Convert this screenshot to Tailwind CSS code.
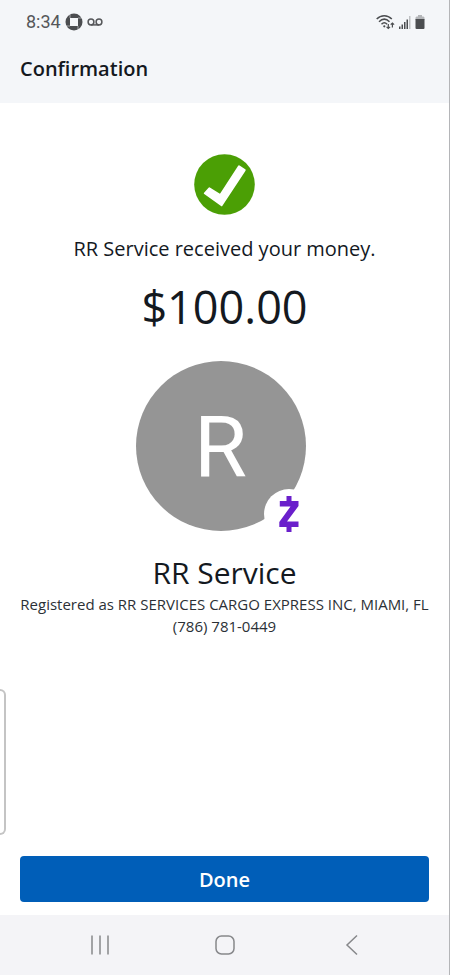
<!DOCTYPE html>
<html lang="en">
<head>
<meta charset="utf-8">
<meta name="viewport" content="width=device-width, initial-scale=1">
<title>Confirmation</title>
<script src="https://cdn.jsdelivr.net/npm/@tailwindcss/browser@4"></script>
</head>
<body class="relative flex min-h-screen flex-col border-r border-[#b4b5b8] bg-white font-['Open_Sans',sans-serif] text-[#14191f]">
  <header class="bg-[#f4f6f9]">
    <div class="flex h-11 items-center justify-between pr-6 pl-[26px]">
      <div class="flex items-center gap-1">
        <span class="font-[Roboto,sans-serif] text-[18px] leading-6 text-[#55575a]">8:34</span>
        <svg class="size-[18px]" viewBox="0 0 18 18" aria-hidden="true">
          <circle cx="9" cy="9" r="8.500" fill="#4b4d50"/>
          <path fill="#f4f6f9" d="M5 5h8v8H5z"/>
          <path stroke="#f4f6f9" stroke-width=".5" d="M5 1V5M17 5H13M13 17V13M1 13H5"/>
        </svg>
        <svg class="h-[9px] w-4" viewBox="0 0 16 9" fill="none" stroke="#55575a" stroke-width="1.500" aria-hidden="true">
          <circle cx="4" cy="4" r="2.900"/><circle cx="12" cy="4" r="2.900"/><path d="M4 6.900h8"/>
        </svg>
      </div>
      <div class="flex items-center gap-1">
        <svg class="h-4 w-[19px]" viewBox="0 0 19 16" fill="none" stroke="#4b4d50" stroke-width="1.500" aria-hidden="true">
          <path d="M.7 5C5 .6 11.500.6 15.800 5M3 7.700C6.300 4.500 10.300 4.500 13.500 7.700M5.500 10.200c1.700-1.700 3.900-1.700 5.600 0"/>
          <circle cx="8.300" cy="12.300" r="1.100" fill="#4b4d50" stroke="none"/>
          <path stroke-width="1.200" d="M12.300 10V14.500M10.600 12.800l1.700 1.700 1.700-1.700M16.400 13.500V9M14.700 10.700L16.400 9l1.700 1.700"/>
        </svg>
        <svg class="h-[13px] w-3" viewBox="0 0 12 13" aria-hidden="true">
          <path fill="#4b4d50" d="M0 10.500h1.500V13H0zM2.500 8.500H4V13H2.500zM5 6h1.500v7H5zM7.500 3.500H9V13H7.500z"/>
          <path fill="#bfc1c4" d="M10 0h1.500v13H10z"/>
        </svg>
        <svg class="h-[14px] w-[10px]" viewBox="0 0 10 14" aria-hidden="true">
          <path fill="#b4b6b9" d="M3 0h4v1.500h1.500l1 1V5h-9V2.500l1-1H3z"/>
          <path fill="#4b4d50" d="M.5 4h9v9q0 1-1 1h-7q-1 0-1-1z"/>
        </svg>
      </div>
    </div>
    <h1 class="px-5 pt-[13px] pb-[22px] text-[20px] leading-6 font-semibold">Confirmation</h1>
  </header>

  <main class="flex flex-1 flex-col items-center px-5 pt-[51px] text-center">
    <svg class="size-[61px]" viewBox="0 0 61 61" role="img" aria-label="Success">
      <circle cx="30.500" cy="30.500" r="30.300" fill="#4b9f05"/>
      <path fill="#fff" stroke="#fff" stroke-width="2" stroke-linejoin="round" d="M15.300 34.300L26.200 41.200 45 12.400 50.700 16.200 27.600 51.300 10.800 39.300z"/>
    </svg>
    <p class="mt-5 text-[20px] leading-7">RR Service received your money.</p>
    <p class="mt-[14px] text-[45px] leading-[60px]">$100.00</p>
    <div class="relative mt-6 mr-2 flex size-[170px] items-center justify-center rounded-full bg-[#959595]">
      <span class="pt-1 font-[Roboto,sans-serif] text-[86px] leading-none text-white">R</span>
      <span class="absolute -right-2 -bottom-2 flex size-[50px] items-center justify-center rounded-full bg-white">
        <svg class="h-9 w-5" viewBox="0 0 20 36" role="img" aria-label="Zelle">
          <path fill="#6a1fcb" d="M7.500 0h5v5H19.500v5L8 25.500H19.500V31H12.500v5h-5v-5H.3v-5L11.500 10.500H.8V5h6.700z"/>
        </svg>
      </span>
    </div>
    <h2 class="mt-[22px] text-[30px] leading-10">RR Service</h2>
    <p class="text-[15px] leading-[22px] whitespace-nowrap text-[#2b3036]">Registered as RR SERVICES CARGO EXPRESS INC, MIAMI, FL</p>
    <p class="text-[15px] leading-[22px] text-[#2b3036]">(786) 781-0449</p>
  </main>

  <div class="absolute bottom-[140px] left-0 h-[146px] w-1.5 rounded-r-md border-2 border-l-0 border-[#c4c4c4] bg-white" aria-hidden="true"></div>

  <div class="px-5 pb-[13px]">
    <button type="button" class="h-[46px] w-full rounded bg-[#005eb8] pt-0.5 text-[20px] leading-7 font-semibold text-white">Done</button>
  </div>

  <nav class="grid h-[60px] grid-cols-[1fr_auto_1fr] items-center bg-[#f4f4f7] text-[#87888b]" aria-label="System navigation">
    <button type="button" aria-label="Recent apps" class="ml-[89px] size-[22px] justify-self-start">
      <svg viewBox="0 0 22 22" fill="none" stroke="currentColor" stroke-width="1.500"><path d="M3 1.500v19M11 1.500v19M19 1.500v19"/></svg>
    </button>
    <button type="button" aria-label="Home" class="size-[22px]">
      <svg viewBox="0 0 22 22" fill="none" stroke="currentColor" stroke-width="1.500"><rect x="2" y="2" width="18" height="18" rx="5.500"/></svg>
    </button>
    <button type="button" aria-label="Back" class="mr-[86px] size-[22px] justify-self-end">
      <svg viewBox="0 0 22 22" fill="none" stroke="currentColor" stroke-width="1.500"><path d="M16 1.500L6 11l10 9.500"/></svg>
    </button>
  </nav>
</body>
</html>
